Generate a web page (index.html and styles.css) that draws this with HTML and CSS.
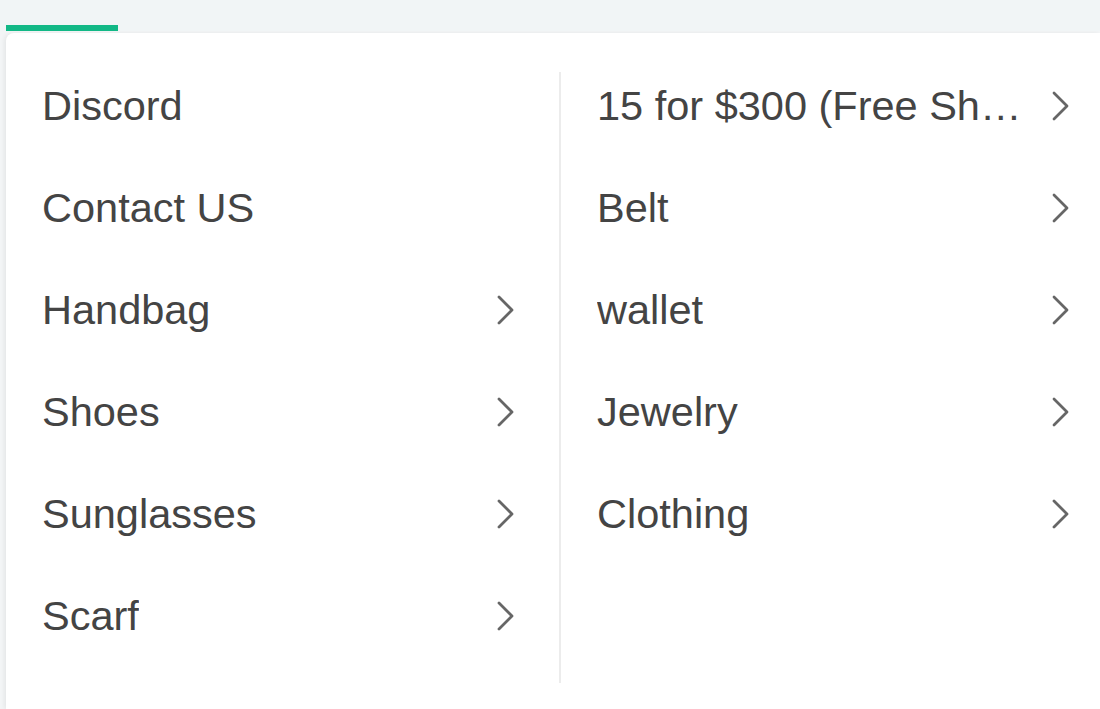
FILE: index.html
```html
<!DOCTYPE html>
<html>
<head>
<meta charset="utf-8">
<link rel="stylesheet" href="styles.css">
</head>
<body>
<div class="topbar">
  <div class="tab-indicator"></div>
</div>
<div class="panel">
  <div class="col col-left">
    <div class="row"><span class="label">Discord</span></div>
    <div class="row"><span class="label">Contact US</span></div>
    <div class="row"><span class="label">Handbag</span><svg class="chev" viewBox="0 0 18 30"><path d="M2 2 L15 15 L2 28"/></svg></div>
    <div class="row"><span class="label">Shoes</span><svg class="chev" viewBox="0 0 18 30"><path d="M2 2 L15 15 L2 28"/></svg></div>
    <div class="row"><span class="label">Sunglasses</span><svg class="chev" viewBox="0 0 18 30"><path d="M2 2 L15 15 L2 28"/></svg></div>
    <div class="row"><span class="label">Scarf</span><svg class="chev" viewBox="0 0 18 30"><path d="M2 2 L15 15 L2 28"/></svg></div>
  </div>
  <div class="divider"></div>
  <div class="col col-right">
    <div class="row"><span class="label">15 for $300 (Free Shipping)</span><svg class="chev" viewBox="0 0 18 30"><path d="M2 2 L15 15 L2 28"/></svg></div>
    <div class="row"><span class="label">Belt</span><svg class="chev" viewBox="0 0 18 30"><path d="M2 2 L15 15 L2 28"/></svg></div>
    <div class="row"><span class="label">wallet</span><svg class="chev" viewBox="0 0 18 30"><path d="M2 2 L15 15 L2 28"/></svg></div>
    <div class="row"><span class="label">Jewelry</span><svg class="chev" viewBox="0 0 18 30"><path d="M2 2 L15 15 L2 28"/></svg></div>
    <div class="row"><span class="label">Clothing</span><svg class="chev" viewBox="0 0 18 30"><path d="M2 2 L15 15 L2 28"/></svg></div>
  </div>
</div>
</body>
</html>
```
FILE: styles.css
```css
html, body {
  margin: 0;
  padding: 0;
  background: #f3f5f6;
  width: 1100px;
  height: 709px;
  overflow: hidden;
  font-family: "Liberation Sans", Arial, sans-serif;
}
.topbar {
  height: 31px;
  background: #f1f5f6;
  position: relative;
}
.tab-indicator {
  position: absolute;
  left: 6px;
  bottom: 0;
  width: 112px;
  height: 6px;
  background: #12b886;
}
.panel {
  margin: 2px 0 0 6px;
  height: 676px;
  background: #ffffff;
  border-top-left-radius: 8px;
  box-shadow: -2px 0 4px rgba(0,0,0,0.06);
  display: flex;
  box-sizing: border-box;
  padding-top: 22px;
}
.col {
  display: flex;
  flex-direction: column;
}
.col-left {
  width: 553px;
  padding: 0 44px 0 37px;
  box-sizing: border-box;
}
.col-right {
  flex: 1;
  padding: 0 30px 0 37px;
  box-sizing: border-box;
  min-width: 0;
}
.divider {
  width: 2px;
  background: #ececec;
  margin-top: 17px;
  height: 611px;
  flex: none;
}
.row {
  height: 102px;
  display: flex;
  align-items: center;
  justify-content: space-between;
  gap: 22px;
}
.label {
  font-size: 41.5px;
  color: #444444;
  white-space: nowrap;
  overflow: hidden;
  text-overflow: ellipsis;
  min-width: 0;
  margin-left: -1px;
}
.chev {
  width: 18px;
  height: 30px;
  flex: none;
}
.chev path {
  fill: none;
  stroke: #666666;
  stroke-width: 2.8;
  stroke-linecap: round;
  stroke-linejoin: round;
}
```
